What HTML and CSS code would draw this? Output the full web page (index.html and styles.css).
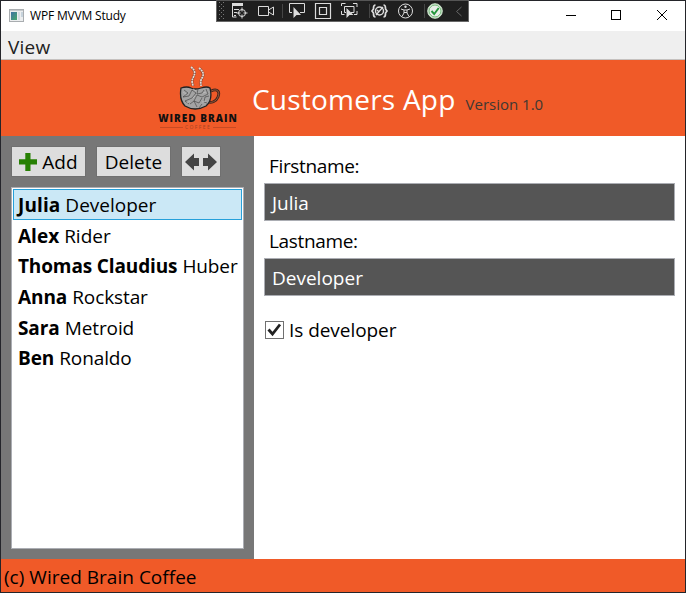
FILE: index.html
```html
<!DOCTYPE html>
<html lang="en">
<head>
<meta charset="utf-8">
<title>WPF MVVM Study</title>
<link rel="stylesheet" href="styles.css">
</head>
<body>
<div class="window">
  <div class="titlebar">
    <svg class="app-icon" width="15" height="13" viewBox="0 0 15 13">
      <defs><linearGradient id="g" x2="1" y2="1"><stop stop-color="#3f72a4"/><stop offset="1" stop-color="#48a86b"/></linearGradient></defs>
      <rect x=".5" y=".5" width="14" height="12" fill="#eceeef" stroke="#a9adb0"/>
      <path d="M1 1.5h13" stroke="#c5c9cc"/><rect x="2" y="3" width="6" height="8" fill="url(#g)"/>
      <rect x="9" y="3" width="2" height="8" fill="#d5dce2"/><rect x="12" y="3" width="2" height="5" fill="#c7d3dc"/>
    </svg>
    <span class="title">WPF MVVM Study</span>
    <svg class="win-buttons" width="119" height="30" viewBox="0 0 119 30" fill="none" stroke="#000" shape-rendering="crispEdges">
      <path d="M0 14.5h10"/><rect x="45.5" y="9.5" width="9" height="9"/><path d="M91 9l10 10M101 9l-10 10" shape-rendering="auto"/>
    </svg>
  </div>
  <div class="menubar"><span class="menu-item">View</span></div>
  <header class="header">
    <div class="logo">
      <svg class="cup" width="42" height="46" viewBox="0 0 42 46" fill="none">
        <path d="M12 1c5 4 4 7 2 11s0 6 0 8M20 2c5 4 5 7 3 10s-1 6-1 8" stroke="#8a4630" stroke-width="2.600"/>
        <path d="M12 1c5 4 4 7 2 11s0 6 0 8M20 2c5 4 5 7 3 10s-1 6-1 8" stroke="#e6dcd6" stroke-width="1.700" stroke-dasharray="2 .6"/>
        <path d="M32 25c7-3 9 1 7 6s-7 6-10 5" stroke="#40251c" stroke-width="2.800"/>
        <path d="M32 25c7-3 9 1 7 6s-7 6-10 5" stroke="#a45a3b" stroke-width=".9"/>
        <path d="M2 22q6-2 10 0t10 0t9 0q3 12-4 18q-11 6-21 0Q0 34 2 22z" fill="#a3a3a3" stroke="#222" stroke-width="1.300"/>
        <path d="M5 24l4 3-5 4 6-1 3-6 4 3-4 5-7 3 4 3M19 23l-1 5 5-1 2-3M27 23l2 5-6 3-5-2-3 6 5 2 3-5M30 30l-4 1-1 5 3 1M11 38l4-3 3 6M20 42l3-4" stroke="#3a3a3a" stroke-width=".6"/>
        <path d="M4 26l3 2M14 23l3 2M24 27l3-1M14 32l2-2M23 36l4-1M8 37l3-2" stroke="#c2c2c2" stroke-width=".7"/>
      </svg>
      <div class="brand">WIRED BRAIN</div>
      <div class="coffee">COFFEE</div>
    </div>
    <h1>Customers App</h1>
    <span class="version">Version 1.0</span>
  </header>
  <main class="main">
    <aside class="sidebar">
      <div class="toolbar">
        <button class="btn add"><svg width="18" height="18" viewBox="0 0 18 18"><path d="M6.3 0h5.200v6.200H18v5.200h-6.500V18H6.300v-6.600H0V6.200h6.300z" fill="#278003"/></svg><span>Add</span></button>
        <button class="btn del"><span>Delete</span></button>
        <button class="btn move"><svg width="32" height="18" viewBox="0 0 32 18"><path d="M0 9L9 .5V5h5v8H9v4.500zM32 9L23 .5V5h-5v8h5v4.500z" fill="#444"/></svg></button>
      </div>
      <div class="list">
        <div class="row selected"><b>Julia</b><span>Developer</span></div>
        <div class="row"><b>Alex</b><span>Rider</span></div>
        <div class="row wide"><b>Thomas Claudius</b><span>Huber</span></div>
        <div class="row tight"><b>Anna</b><span>Rockstar</span></div>
        <div class="row tight"><b>Sara</b><span>Metroid</span></div>
        <div class="row tight"><b>Ben</b><span>Ronaldo</span></div>
      </div>
    </aside>
    <section class="form">
      <label class="label">Firstname:</label>
      <div class="field"><span>Julia</span></div>
      <label class="label">Lastname:</label>
      <div class="field"><span>Developer</span></div>
      <div class="check">
        <svg width="19" height="18" viewBox="0 0 19 18"><rect x=".5" y=".5" width="18" height="17" fill="#fff" stroke="#707070"/><path d="M3.500 8.500l4 4.500L15 3.500" fill="none" stroke="#212121" stroke-width="2.800"/></svg>
        <span>Is developer</span>
      </div>
    </section>
  </main>
  <footer class="footer"><span>(c) Wired Brain Coffee</span></footer>
</div>
<div class="debugbar">
  <svg width="252" height="22" viewBox="0 0 252 22" fill="none" stroke="#dcdcdc">
    <g stroke="#777" stroke-dasharray="1 3"><path d="M3.500 2v18M7.500 2v18"/><path d="M5.500 4v16"/></g>
    <path d="M16 4.500h11" stroke-width="3"/><path d="M16.500 5v12h4M18 9.500h5M18 12.500h3M18 15.500h2"/>
    <circle cx="26" cy="13" r="3.500"/><path d="M26 7.500v4M26 14.500v4M20.500 13h4M27.500 13h4"/>
    <path d="M42.500 6.500h10v9h-10zM52.500 10l5-3v8l-5-3"/>
    <path d="M66.500 4v14M153.500 4v14M208.500 4v14" stroke="#454545"/>
    <path d="M76 12.500h-2.500v-9h15v9H84"/><path d="M77.500 7v11l3-3h4.500z" fill="#dcdcdc" stroke="none"/>
    <path d="M99.500 3.500h15v15h-15zM103.500 7.500h7v7h-7z" stroke-width="1.200"/>
    <path d="M125.500 6V3.500h4M137 3.500h4V7M125.500 11v3.500h3M138 14.500h3V11"/><path d="M130 12.500h-1.500v-6h9.500v6h-3"/><path d="M130.500 8v10l3-3h4z" fill="#dcdcdc" stroke="none"/>
    <path d="M159.500 5q-2 0-2 3v1l-1.500 2 1.500 2v1q0 3 2 3M167.500 5q2 0 2 3v1l1.500 2-1.500 2v1q0 3-2 3" stroke-width="1.700"/><circle cx="163.500" cy="11" r="4" stroke-width="1.500"/><path d="M160 15l7-8M161 10l2 2" stroke-width="1.300"/>
    <circle cx="189.500" cy="11" r="7"/><circle cx="189.500" cy="6.800" r="1.200" fill="#dcdcdc" stroke="none"/><path d="M185 9l3 1h3l3-1M188 10v3l-2 3.500M191 10v3l2 3.500M188 12.500h3"/>
    <circle cx="219" cy="11" r="7.300" fill="#e8eee8" stroke="#c5dfc5"/><circle cx="219" cy="11" r="6" stroke="#6db873"/><path d="M215.500 11l2.700 3 4.500-6" stroke="#23963b" stroke-width="1.900"/>
    <path d="M245.500 7l-5 4.500 5 4.500" stroke="#666"/>
  </svg>
</div>
</body>
</html>
```
FILE: styles.css
```css
* { box-sizing: border-box; }
body { margin: 0; width: 686px; height: 593px; overflow: hidden; font-family: "Open Sans", "Noto Sans", sans-serif; font-size: 19px; color: #000; }
svg { display: block; flex: none; }
.window { width: 686px; height: 593px; border: 1px solid #24252a; display: flex; flex-direction: column; background: #fff; }
span, b, label, h1 { white-space: nowrap; }
.titlebar { height: 30px; flex: none; display: flex; align-items: center; padding-left: 8px; }
.app-icon { margin-top: -2px; }
.title { font-size: 12px; margin: -2px 0 0 6px; letter-spacing: -.18px; }
.win-buttons { margin-left: auto; }
.menubar { height: 29px; flex: none; background: #efefef; border-bottom: 1px solid #c5c1bf; padding-left: 7px; line-height: 32px; color: #212121; letter-spacing: .2px; }
.header { height: 76px; flex: none; background: #f05a28; display: flex; align-items: flex-start; }
.logo { width: 84px; height: 76px; margin-left: 155px; display: flex; flex-direction: column; align-items: center; padding-top: 6px; }
.cup { margin-left: 4px; }
.brand { font: 800 10px/12px "Open Sans", sans-serif; letter-spacing: 1px; white-space: nowrap; color: #101010; }
.coffee { font: 5px/7px "Open Sans", sans-serif; letter-spacing: 1.400px; color: #a54526; display: flex; align-items: center; gap: 2px; }
.coffee::before, .coffee::after { content: ""; width: 23px; height: 1px; background: #c84b23; }
h1 { margin: 0 0 0 12px; font-size: 28px; font-weight: 400; line-height: 79px; letter-spacing: .22px; color: #fff; }
.version { font-size: 15px; line-height: 89px; margin-left: 10px; color: #403832; }
.main { flex: 1; display: flex; min-height: 0; }
.sidebar { width: 253px; background: #777; padding: 11px 10px 10px; display: flex; flex-direction: column; }
.toolbar { display: flex; gap: 12px; height: 29px; margin: 0 0 11px 1px; }
.btn { height: 29px; border: 0; background: #ddd; padding: 0; font: inherit; color: #000; display: flex; align-items: center; justify-content: center; line-height: 29px; box-shadow: 0 0 0 1px #707070; }
.btn span { position: relative; top: 1px; }
.add { width: 73px; gap: 5px; }
.del { width: 73px; }
.move { width: 38px; }
.list { flex: 1; background: #fff; border: 1px solid #abadb3; padding: 1px; }
.row { height: 30.600px; display: flex; gap: 5px; align-items: center; padding: 2px 0 0 4px; border: 1px solid transparent; }
.selected { background: #cbe8f6; border-color: #26a0da; }
.selected b { letter-spacing: .1px; }
.wide { letter-spacing: -.13px; }
.tight { letter-spacing: -.1px; }
.form { flex: 1; padding: 14px 10px 0; display: flex; flex-direction: column; }
.label { height: 33px; line-height: 32px; padding-left: 5px; letter-spacing: -.35px; }
.field { height: 38px; background: #555; border: 1px solid #abadb3; color: #fff; line-height: 38px; padding-left: 7px; margin-bottom: 4px; }
.check { display: flex; align-items: center; gap: 5px; margin: 20px 0 0 1px; height: 20px; letter-spacing: -.05px; }
.footer { height: 33px; flex: none; background: #f05a28; padding-left: 3px; line-height: 36px; letter-spacing: .02px; }
.debugbar { position: absolute; left: 216px; top: 0; width: 253px; height: 22px; background: #1f1f1f; border: 1px solid #686868; border-top-color: #555; overflow: hidden; }
.debugbar svg { margin: -1px 0 0 -1px; }
```
